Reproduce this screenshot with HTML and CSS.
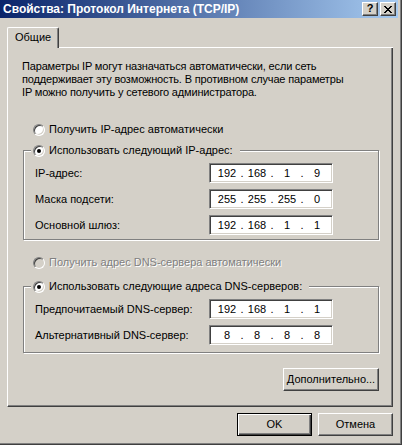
FILE: index.html
```html
<!DOCTYPE html>
<html lang="ru">
<head>
<meta charset="utf-8">
<title>Свойства: Протокол Интернета (TCP/IP)</title>
<link rel="stylesheet" href="styles.css">
</head>
<body>
<div class="window">
  <div class="titlebar">
    <span class="title">Свойства: Протокол Интернета (TCP/IP)</span>
    <div class="caption-btns">
      <span class="cbtn help">?</span>
      <span class="cbtn close">
        <svg width="8" height="7" viewBox="0 0 8 7" shape-rendering="crispEdges">
          <path fill="#000" d="M0 0h2v1h-2zM6 0h2v1h-2zM1 1h2v1h-2zM5 1h2v1h-2zM2 2h4v1h-4zM3 3h2v1h-2zM2 4h4v1h-4zM1 5h2v1h-2zM5 5h2v1h-2zM0 6h2v1h-2zM6 6h2v1h-2z"/>
        </svg>
      </span>
    </div>
  </div>
  <div class="client">
    <div class="tabrow">
      <div class="tab">Общие</div>
      <div class="tabfill"></div>
    </div>
    <div class="panel">
      <p class="intro">Параметры IP могут назначаться автоматически, если сеть<br>поддерживает эту возможность. В противном случае параметры<br>IP можно получить у сетевого администратора.</p>

      <div class="radio-row first">
        <span class="radio"></span>
        <span>Получить IP-адрес автоматически</span>
      </div>

      <div class="group ip">
        <div class="legend">
          <span class="radio checked"></span>
          <span>Использовать следующий IP-адрес:</span>
        </div>
        <div class="fields">
          <span class="label">IP-адрес:</span>
          <div class="ipbox"><span class="oct">192</span><span class="dot">.</span><span class="oct">168</span><span class="dot">.</span><span class="oct">1</span><span class="dot">.</span><span class="oct">9</span></div>
          <span class="label">Маска подсети:</span>
          <div class="ipbox"><span class="oct">255</span><span class="dot">.</span><span class="oct">255</span><span class="dot">.</span><span class="oct">255</span><span class="dot">.</span><span class="oct">0</span></div>
          <span class="label">Основной шлюз:</span>
          <div class="ipbox"><span class="oct">192</span><span class="dot">.</span><span class="oct">168</span><span class="dot">.</span><span class="oct">1</span><span class="dot">.</span><span class="oct">1</span></div>
        </div>
      </div>

      <div class="radio-row disabled dns-auto">
        <span class="radio"></span>
        <span>Получить адрес DNS-сервера автоматически</span>
      </div>

      <div class="group dns">
        <div class="legend">
          <span class="radio checked"></span>
          <span>Использовать следующие адреса DNS-серверов:</span>
        </div>
        <div class="fields">
          <span class="label">Предпочитаемый DNS-сервер:</span>
          <div class="ipbox"><span class="oct">192</span><span class="dot">.</span><span class="oct">168</span><span class="dot">.</span><span class="oct">1</span><span class="dot">.</span><span class="oct">1</span></div>
          <span class="label">Альтернативный DNS-сервер:</span>
          <div class="ipbox"><span class="oct">8</span><span class="dot">.</span><span class="oct">8</span><span class="dot">.</span><span class="oct">8</span><span class="dot">.</span><span class="oct">8</span></div>
        </div>
      </div>

      <div class="adv-row">
        <div class="btn adv">Дополнительно...</div>
      </div>
    </div>
    <div class="footer">
      <div class="btn default">OK</div>
      <div class="btn">Отмена</div>
    </div>
  </div>
</div>
</body>
</html>
```

FILE: styles.css
```css
html, body {
  margin: 0;
  padding: 0;
}

body {
  background: #d4d0c8;
  font-family: "Liberation Sans", Arial, sans-serif;
  font-size: 11px;
  line-height: 13px;
  color: #000;
}

.window {
  width: 402px;
  height: 445px;
  box-sizing: border-box;
  border-right: 1px solid #404040;
  border-bottom: 1px solid #404040;
  box-shadow: inset -1px -1px #808080;
  padding: 0 3px 3px 0;
  display: flex;
  flex-direction: column;
}

.titlebar {
  height: 18px;
  flex: none;
  display: flex;
  align-items: center;
  padding: 0 2px 0 3px;
  background: linear-gradient(to right, #0a246a, #a6caf0);
}

.title {
  flex: 1;
  color: #fff;
  font-weight: bold;
  font-size: 12px;
  line-height: 14px;
  white-space: nowrap;
}

.caption-btns {
  display: flex;
  gap: 2px;
}

.cbtn {
  width: 16px;
  height: 14px;
  box-sizing: border-box;
  background: #d4d0c8;
  border: 1px solid;
  border-color: #fff #404040 #404040 #fff;
  box-shadow: inset -1px -1px #808080;
  display: flex;
  align-items: center;
  justify-content: center;
  font-weight: bold;
  font-size: 11px;
  line-height: 11px;
}

.cbtn.help {
  padding-bottom: 1px;
}

.client {
  flex: 1;
  display: flex;
  flex-direction: column;
  padding: 9px 5px 0 7px;
}

.tabrow {
  display: flex;
  height: 21px;
}

.tab {
  width: 52px;
  box-sizing: border-box;
  border-top: 1px solid #fff;
  border-left: 1px solid #fff;
  border-right: 1px solid #404040;
  box-shadow: inset -1px 0 #808080;
  border-radius: 2px 2px 0 0;
  padding: 3px 0 0 7px;
}

.tabfill {
  flex: 1;
  border-bottom: 1px solid #fff;
}

.panel {
  border-left: 1px solid #fff;
  border-right: 1px solid #404040;
  border-bottom: 1px solid #404040;
  box-shadow: inset -1px -1px #808080;
  padding: 12px 0 15px 14px;
}

.intro {
  margin: 0;
  white-space: nowrap;
  letter-spacing: -0.16px;
}

.radio-row {
  display: flex;
  align-items: center;
  height: 13px;
  margin-left: 11px;
  gap: 4px;
  white-space: nowrap;
}

.radio-row.first {
  margin-top: 24px;
}

.radio-row.dns-auto {
  margin-top: 16px;
}

.radio-row.disabled {
  color: #808080;
  text-shadow: 1px 1px #fff;
}

.radio {
  width: 12px;
  height: 12px;
  flex: none;
  box-sizing: border-box;
  border-radius: 50%;
  border: 1px solid;
  border-color: #808080 #fff #fff #808080;
  background: #fff;
  box-shadow: inset 1px 1px #404040, inset -1px -1px #d4d0c8;
  display: flex;
  align-items: center;
  justify-content: center;
}

.radio-row.disabled .radio {
  background: #d4d0c8;
}

.radio.checked::after {
  content: "";
  width: 4px;
  height: 4px;
  border-radius: 50%;
  background: #000;
}

.group {
  width: 356px;
  box-sizing: border-box;
  margin: 14px 0 0 1px;
  border: 1px solid #808080;
  box-shadow: inset 1px 1px #fff, 1px 1px #fff;
  display: flex;
  flex-direction: column;
}

.group.ip {
  padding-bottom: 4px;
}

.group.dns {
  margin-top: 17px;
  padding-bottom: 7px;
}

.legend {
  align-self: flex-start;
  height: 13px;
  margin: -7px 0 0 7px;
  padding: 0 7px 0 2px;
  background: #d4d0c8;
  display: flex;
  align-items: center;
  gap: 4px;
  white-space: nowrap;
}

.fields {
  display: grid;
  grid-template-columns: 174px 124px;
  grid-auto-rows: 20px;
  row-gap: 6px;
  align-items: center;
  margin: 6px 0 0 11px;
}

.label {
  white-space: nowrap;
}

.ipbox {
  height: 20px;
  box-sizing: border-box;
  background: #fff;
  border: 1px solid;
  border-color: #808080 #fff #fff #808080;
  box-shadow: inset 1px 1px #404040, inset -1px -1px #d4d0c8;
  display: flex;
  align-items: center;
  padding-left: 5px;
}

.oct {
  width: 24px;
  text-align: center;
}

.dot {
  width: 6px;
  text-align: center;
}

.adv-row {
  width: 356px;
  margin: 15px 0 0 1px;
  display: flex;
  justify-content: flex-end;
}

.btn {
  height: 23px;
  box-sizing: border-box;
  display: flex;
  align-items: center;
  justify-content: center;
  border: 1px solid;
  border-color: #fff #404040 #404040 #fff;
  box-shadow: inset -1px -1px #808080;
  white-space: nowrap;
}

.btn.adv {
  width: 96px;
}

.footer {
  display: flex;
  justify-content: flex-end;
  gap: 6px;
  margin-top: 6px;
}

.footer .btn {
  width: 75px;
}

.btn.default {
  border: 1px solid #000;
  box-shadow: inset 1px 1px #fff, inset -1px -1px #404040, inset -2px -2px #808080;
}
```
